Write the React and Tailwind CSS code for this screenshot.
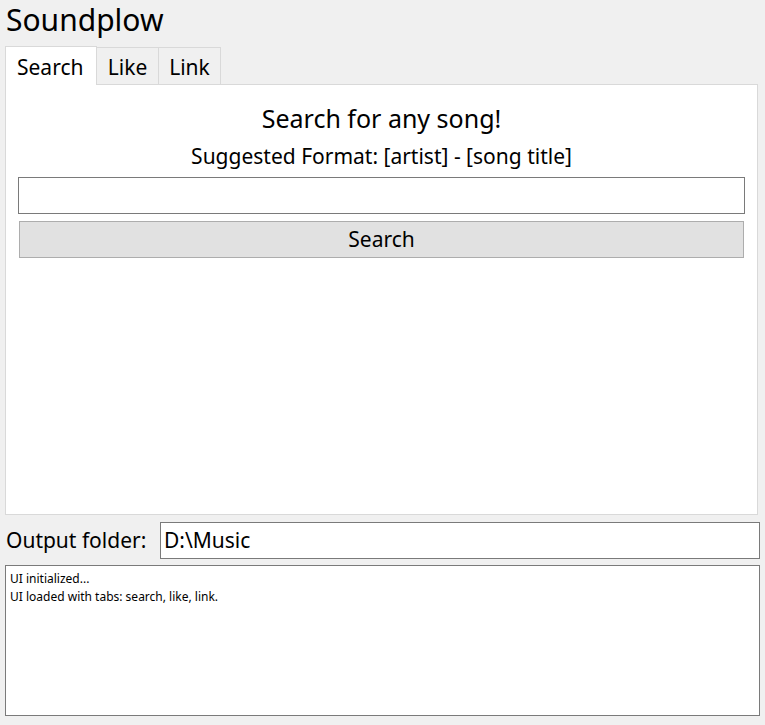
import React from "react";

const font = { fontFamily: '"Noto Sans", "Open Sans", sans-serif' };

const App = () => {
  return (
    <div
      className="w-[765px] h-[725px] bg-[#f0f0f0] flex flex-col pl-[5px] pr-[5px] text-[#000] overflow-hidden"
      style={font}
    >
      {/* Title */}
      <div className="h-[46px] pl-[1px] text-[30px] leading-[40px]">Soundplow</div>

      {/* Tabs */}
      <div className="h-[38px] flex items-end relative z-10">
        <div className="w-[92px] h-[39px] bg-white border border-b-0 border-[#d9d9d9] text-[21px] leading-[40px] pl-[11px] -mb-px">
          Search
        </div>
        <div className="w-[62px] h-[37px] bg-[#f0f0f0] border border-l-0 border-b-0 border-[#d9d9d9] text-[21px] leading-[38px] text-center">
          Like
        </div>
        <div className="w-[62px] h-[37px] bg-[#f0f0f0] border border-l-0 border-b-0 border-[#d9d9d9] text-[21px] leading-[38px] text-center">
          Link
        </div>
      </div>

      {/* Panel */}
      <div className="w-[753px] h-[431px] bg-white border border-[#d9d9d9] flex flex-col px-[12px] pt-[15px]">
        <div className="text-center text-[25px] leading-[36px]">Search for any song!</div>
        <div className="text-center text-[21px] leading-[30px] mt-[5px]">
          Suggested Format: [artist] - [song title]
        </div>
        <div className="h-[37px] border border-[#7a7a7a] bg-white mt-[6px]"></div>
        <div className="h-[37px] mx-[1px] mt-[7px] border border-[#adadad] bg-[#e1e1e1] text-center text-[21px] leading-[35px]">
          Search
        </div>
      </div>

      {/* Output folder */}
      <div className="flex items-center mt-[7px] h-[37px]">
        <div className="w-[155px] pl-[1px] text-[21px] leading-[37px]">Output folder:</div>
        <div className="flex-1 h-[37px] border border-[#7a7a7a] bg-white text-[21px] leading-[35px] pl-[3px]">
          D:\Music
        </div>
      </div>

      {/* Log */}
      <div className="mt-[6px] h-[151px] border border-[#7a7a7a] bg-white px-[4px] pt-[4px] text-[12px] leading-[18px]">
        <div>UI initialized...</div>
        <div>UI loaded with tabs: search, like, link.</div>
      </div>
    </div>
  );
};

export default App;
